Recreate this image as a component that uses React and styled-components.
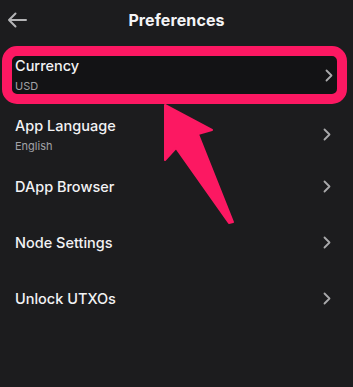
import React from 'react';
import styled, { createGlobalStyle } from 'styled-components';

const GlobalStyle = createGlobalStyle`
  html, body {
    margin: 0;
    padding: 0;
    background: #1c1c1e;
  }
  body {
    font-family: Inter, "Noto Sans", sans-serif;
    -webkit-font-smoothing: antialiased;
  }
`;

const rows = [
  { title: 'Currency', sub: 'USD', highlighted: true },
  { title: 'App Language', sub: 'English', height: 47, offset: 5 },
  { title: 'DApp Browser' },
  { title: 'Node Settings' },
  { title: 'Unlock UTXOs' },
];

const App = () => (
  <Screen>
    <GlobalStyle />
    <Header>
      <BackButton type="button" aria-label="Back">
        <svg width="20" height="16" viewBox="0 0 20 16" fill="none">
          <path
            d="M19 8H2M8.5 1.5L2 8l6.5 6.5"
            stroke="#b4b4b6"
            strokeWidth="2"
            strokeLinecap="round"
            strokeLinejoin="round"
          />
        </svg>
      </BackButton>
      <Title>Preferences</Title>
    </Header>
    <List>
      {rows.map((row) => (
        <Row
          key={row.title}
          $highlighted={row.highlighted}
          $height={row.height}
          $offset={row.offset}
        >
          <Texts>
            <RowTitle>{row.title}</RowTitle>
            {row.sub && <RowSub>{row.sub}</RowSub>}
          </Texts>
          <Chevron width="8" height="13" viewBox="0 0 8 13" fill="none">
            <path
              d="M1.5 1.5L6.5 6.5L1.5 11.5"
              stroke="#a9a9ab"
              strokeWidth="1.8"
              strokeLinecap="round"
              strokeLinejoin="round"
            />
          </Chevron>
        </Row>
      ))}
    </List>
    <Pointer width="353" height="387" viewBox="0 0 353 387">
      <polygon
        points="165,105 212,130 198,134 233,222 229,223 176,148 165,160"
        fill="#fc1862"
        stroke="#fc1862"
        strokeWidth="2"
        strokeLinejoin="round"
      />
    </Pointer>
  </Screen>
);

const Screen = styled.div`
  position: relative;
  width: 353px;
  height: 387px;
  background: #1c1c1e;
  overflow: hidden;
`;

const Header = styled.div`
  position: relative;
  height: 46px;
  display: flex;
  align-items: center;
  justify-content: center;
`;

const BackButton = styled.button`
  position: absolute;
  left: 7px;
  top: 12px;
  border: none;
  background: none;
  padding: 0;
  width: 22px;
  height: 16px;
  display: flex;
  align-items: center;
  cursor: pointer;
`;

const Title = styled.h1`
  margin: 0 0 6px;
  font-size: 16px;
  font-weight: 700;
  color: #f4f4f6;
  letter-spacing: 0.1px;
`;

const List = styled.div`
  display: flex;
  flex-direction: column;
`;

const Row = styled.div`
  height: ${(p) => (p.$highlighted ? '38px' : `${p.$height || 56}px`)};
  display: flex;
  align-items: center;
  justify-content: space-between;
  padding: ${(p) =>
    p.$highlighted ? '0 4px 0 3px' : `${p.$offset || 0}px 22px 0 15px`};
  margin: ${(p) => (p.$highlighted ? '0 6px 2px 2px' : '0')};
  border: ${(p) => (p.$highlighted ? '10px solid #fc1862' : 'none')};
  border-radius: ${(p) => (p.$highlighted ? '15px' : '0')};
  background: ${(p) => (p.$highlighted ? '#131315' : 'transparent')};
`;

const Texts = styled.div`
  display: flex;
  flex-direction: column;
  gap: 6px;
`;

const RowTitle = styled.div`
  font-size: 14.5px;
  font-weight: 500;
  color: #f2f2f4;
  line-height: 17px;
`;

const RowSub = styled.div`
  font-size: 11px;
  color: #a2a2a6;
  line-height: 13px;
`;

const Chevron = styled.svg`
  flex: none;
`;

const Pointer = styled.svg`
  position: absolute;
  left: 0;
  top: 0;
  pointer-events: none;
`;

export default App;
